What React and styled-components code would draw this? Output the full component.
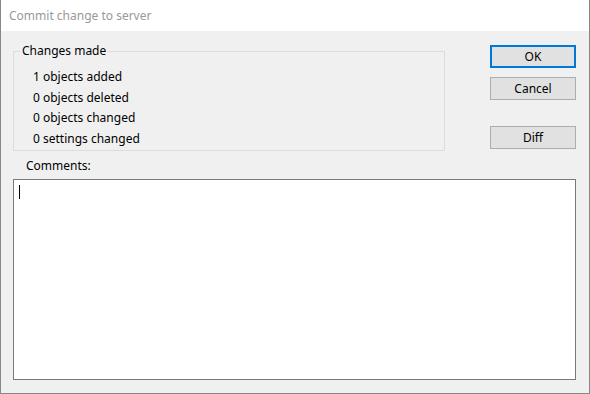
import styled, { createGlobalStyle } from "styled-components";

const Global = createGlobalStyle`
	html, body {
		margin: 0;
		padding: 0;
		background: #f0f0f0;
	}
	* {
		box-sizing: border-box;
	}
`;

const Window = styled.div`
	width: 590px;
	height: 394px;
	border: 1px solid #888888;
	border-top: none;
	background: #f0f0f0;
	display: flex;
	flex-direction: column;
	font-family: "Noto Sans", "Segoe UI", sans-serif;
	font-size: 12px;
	color: #000;
`;

const TitleBar = styled.div`
	height: 31px;
	background: #ffffff;
	display: flex;
	align-items: center;
	padding-left: 8px;
	color: #999999;
	font-size: 12px;
`;

const Body = styled.div`
	flex: 1;
	display: flex;
	flex-direction: column;
	padding: 14px 12px 13px 12px;
`;

const TopRow = styled.div`
	display: flex;
	align-items: flex-start;
	justify-content: space-between;
`;

const Group = styled.fieldset`
	width: 432px;
	height: 108px;
	margin: -2px 0 0 0;
	padding: 8px 0 0 19px;
	border: 1px solid #dcdcdc;
`;

const Legend = styled.legend`
	margin-left: -13px;
	padding: 0 2px;
	line-height: 16px;
`;

const Item = styled.div`
	line-height: 20.5px;
`;

const Buttons = styled.div`
	display: flex;
	flex-direction: column;
	width: 86px;
	margin-right: 1px;
`;

const Button = styled.button`
	height: 23px;
	width: 86px;
	margin: 0;
	padding: 0;
	font: inherit;
	color: #000;
	background: #e1e1e1;
	border: ${(p) => (p.$default ? "2px solid #0078d7" : "1px solid #adadad")};
	margin-top: ${(p) => p.$gap || 0}px;
`;

const Label = styled.div`
	margin: 7px 0 0 13px;
	line-height: 16px;
`;

const CommentBox = styled.div`
	flex: 1;
	margin-top: 5px;
	margin-right: 1px;
	background: #ffffff;
	border: 1px solid #7a7a7a;
	padding: 5px 5px;
`;

const Caret = styled.span`
	display: block;
	width: 1px;
	height: 14px;
	background: #000;
`;

const changes = [
	"1 objects added",
	"0 objects deleted",
	"0 objects changed",
	"0 settings changed",
];

function App() {
	return (
		<>
			<Global />
			<Window>
				<TitleBar>Commit change to server</TitleBar>
				<Body>
					<TopRow>
						<Group>
							<Legend>Changes made</Legend>
							{changes.map((c) => (
								<Item key={c}>{c}</Item>
							))}
						</Group>
						<Buttons>
							<Button $default>OK</Button>
							<Button $gap={9}>Cancel</Button>
							<Button $gap={26}>Diff</Button>
						</Buttons>
					</TopRow>
					<Label>Comments:</Label>
					<CommentBox>
						<Caret />
					</CommentBox>
				</Body>
			</Window>
		</>
	);
}

export default App;
